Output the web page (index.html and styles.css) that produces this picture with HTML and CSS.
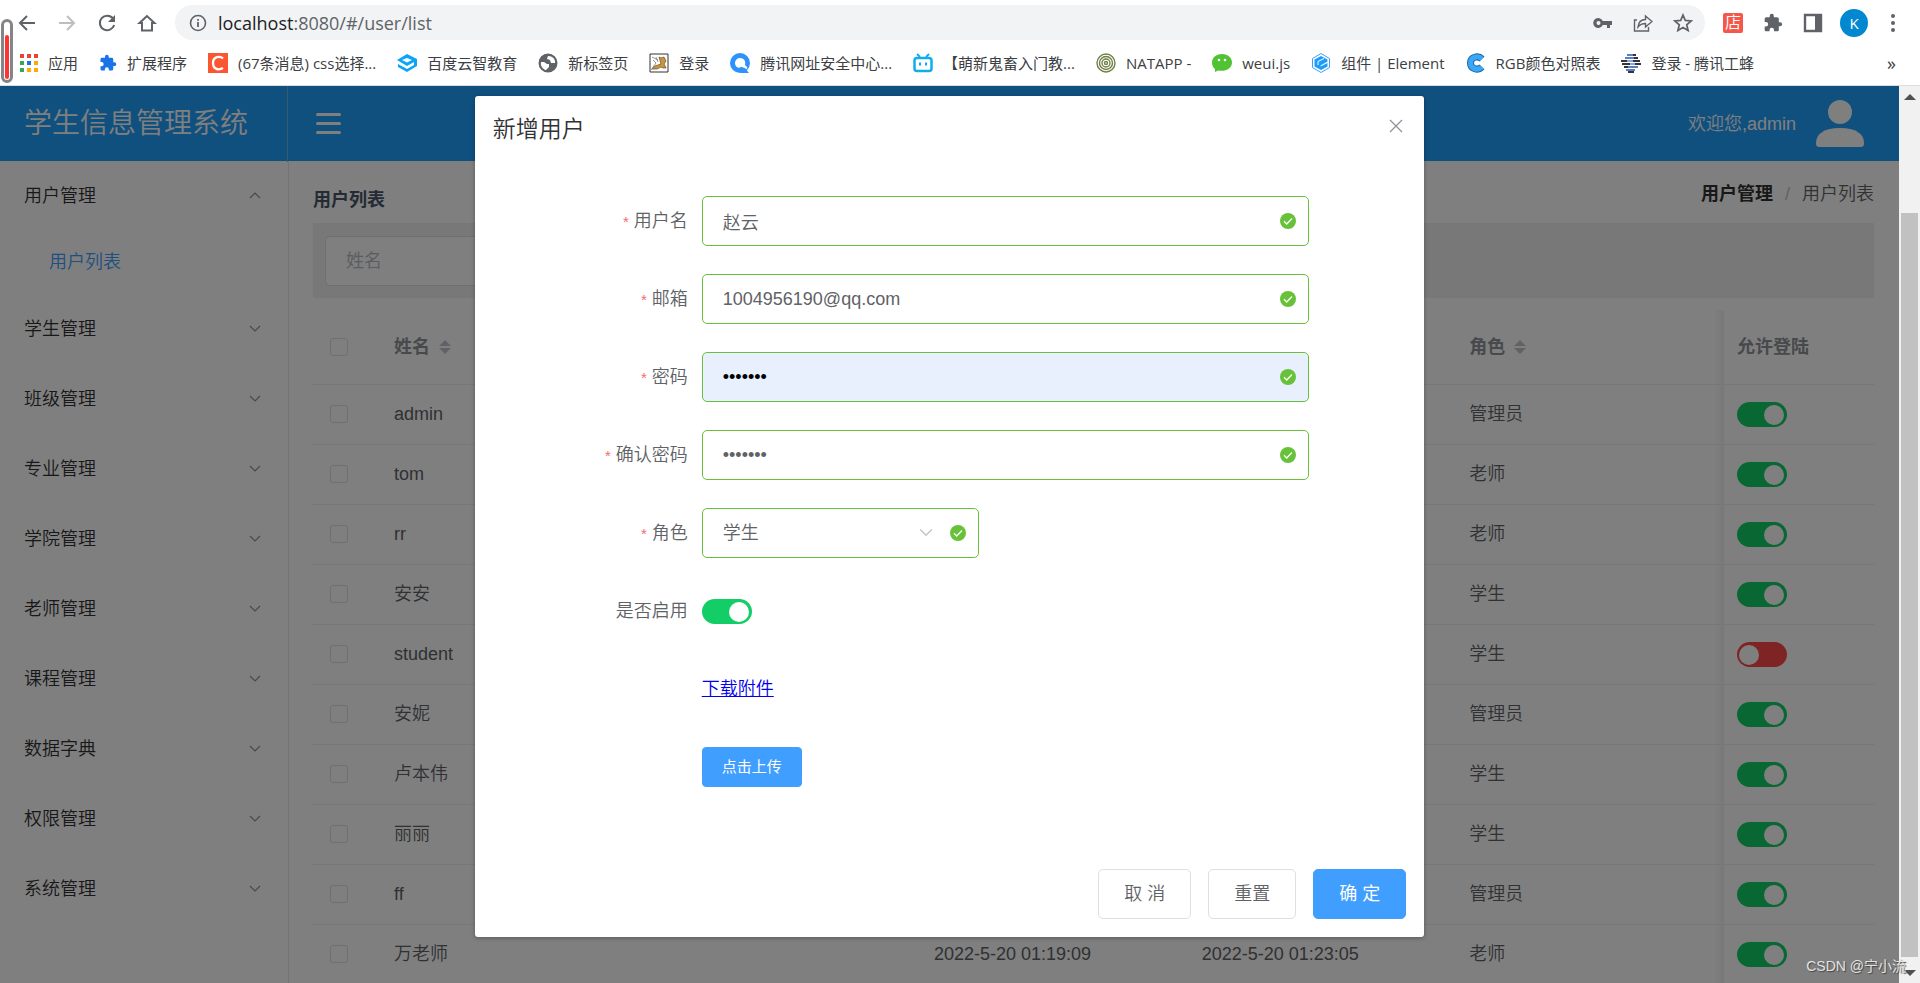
FILE: index.html
```html
<!DOCTYPE html>
<html lang="zh-CN">
<head>
<meta charset="utf-8">
<title>学生信息管理系统</title>
<link rel="stylesheet" href="styles.css">
</head>
<body>
<svg class="sprite" aria-hidden="true">
  <symbol id="down" viewBox="0 0 12 12"><path d="M1 3l5 5 5-5" fill="none" stroke="currentColor" stroke-width="1.200"/></symbol>
  <symbol id="up" viewBox="0 0 12 12"><path d="M1 8l5-5 5 5" fill="none" stroke="currentColor" stroke-width="1.200"/></symbol>
  <symbol id="sort" viewBox="0 0 12 16"><path d="M6 1l6 6H0zM6 15l6-6H0z" fill="currentColor"/></symbol>
  <symbol id="ok" viewBox="0 0 16 16"><circle cx="8" cy="8" r="8" fill="#67c23a"/><path d="M4 8.300l2.700 2.700L12 5.500" fill="none" stroke="#fff" stroke-width="1.300"/></symbol>
  <symbol id="puzzle" viewBox="0 0 24 24"><path d="M20.500 11H19V7c0-1.100-.9-2-2-2h-4V3.500a2.500 2.500 0 0 0-5 0V5H4c-1.100 0-2 .9-2 2v3.800h1.500a2.700 2.700 0 0 1 0 5.400H2V20c0 1.100.9 2 2 2h3.800v-1.500a2.700 2.700 0 0 1 5.400 0V22H17c1.100 0 2-.9 2-2v-4h1.500a2.500 2.500 0 0 0 0-5z" fill="currentColor"/></symbol>
</svg>

<header class="browser">
  <div class="toolbar">
    <button class="tool" aria-label="后退"><svg width="20" height="20" viewBox="0 0 20 20"><path d="M18 10H3M10 3l-7 7 7 7" fill="none" stroke="#5f6368" stroke-width="2"/></svg></button>
    <button class="tool" aria-label="前进"><svg width="20" height="20" viewBox="0 0 20 20"><path d="M2 10h15M10 3l7 7-7 7" fill="none" stroke="#bcbec0" stroke-width="2"/></svg></button>
    <button class="tool" aria-label="刷新"><svg width="20" height="20" viewBox="0 0 20 20"><path d="M16 5.500A7.300 7.300 0 1 0 17.200 12" fill="none" stroke="#5f6368" stroke-width="2"/><path d="M18 2v7h-7z" fill="#5f6368"/></svg></button>
    <button class="tool" aria-label="主页"><svg width="20" height="20" viewBox="0 0 20 20"><path d="M10 3l-7.500 7H5v7.500h10V10h2.500z" fill="none" stroke="#5f6368" stroke-width="2"/></svg></button>
    <div class="omnibox">
      <svg width="18" height="18" viewBox="0 0 18 18"><circle cx="9" cy="9" r="7.500" fill="none" stroke="#5f6368" stroke-width="1.600"/><path d="M9 8v5M9 5v1.700" stroke="#5f6368" stroke-width="1.800"/></svg>
      <div class="url"><span class="host">localhost</span>:8080/#/user/list</div>
      <div class="omni-actions">
        <svg width="20" height="20" viewBox="0 0 20 20"><path d="M9.800 8a5 5 0 1 0 0 4H14v3h3v-3h2V8z" fill="#5f6368"/><circle cx="5.500" cy="10" r="2" fill="#f1f3f4"/></svg>
        <svg width="20" height="20" viewBox="0 0 20 20"><path d="M4 7H1.500v11h14v-4M5 14c.5-5 3-7.500 7.500-7.500V3L19 8.500 12.500 14v-3.500C9 10.500 7 11.500 5 14z" fill="none" stroke="#5f6368" stroke-width="1.400"/></svg>
        <svg width="20" height="20" viewBox="0 0 20 20"><path d="M10 2l2.300 5.400 5.900.5-4.500 3.900 1.400 5.700L10 14.500l-5.100 3 1.400-5.700L1.800 7.900l5.900-.5z" fill="none" stroke="#5f6368" stroke-width="1.700"/></svg>
      </div>
    </div>
    <div class="extensions">
      <span class="shop">店</span>
      <svg class="grey" width="20" height="20"><use href="#puzzle"/></svg>
      <svg width="20" height="20" viewBox="0 0 20 20"><path d="M2 2h16v16H2z" fill="none" stroke="#5f6368" stroke-width="2.400"/><path d="M12 2h6v16h-6z" fill="#5f6368"/></svg>
      <button class="profile">K</button>
      <button class="tool" aria-label="更多"><svg width="6" height="20" viewBox="0 0 6 20"><g fill="#5f6368"><circle cx="3" cy="3" r="2"/><circle cx="3" cy="10" r="2"/><circle cx="3" cy="17" r="2"/></g></svg></button>
    </div>
  </div>
  <nav class="bookmarks">
    <a href="#"><svg width="18" height="18" viewBox="0 0 18 18"><path d="M0 0h4v4H0zM7 0h4v4H7zM14 0h4v4h-4z" fill="#ea4335"/><path d="M0 7h4v4H0zM0 14h4v4H0z" fill="#34a853"/><path d="M7 7h4v4H7z" fill="#1a73e8"/><path d="M7 14h4v4H7zM14 7h4v4h-4zM14 14h4v4h-4z" fill="#fbab05"/></svg>应用</a>
    <a href="#"><svg class="blue" width="18" height="18"><use href="#puzzle"/></svg>扩展程序</a>
    <a href="#"><svg width="20" height="20" viewBox="0 0 20 20"><path d="M0 0h20v20H0z" fill="#fc5531"/><path d="M15 5.500C12 2.500 5 3.500 5 10s6 7.500 10 5" fill="none" stroke="#fff" stroke-width="2.300"/></svg>(67条消息) css选择...</a>
    <a href="#"><svg width="20" height="20" viewBox="0 0 20 20"><path d="M10 1l10 5v7l-10 6-9-5v-3l9 5 7-4V9l-7 4L0 7z" fill="#0aa5f8"/><path d="M5 7l5 2.500L15 7l-5-2z" fill="#fff"/></svg>百度云智教育</a>
    <a href="#"><svg width="20" height="20" viewBox="0 0 20 20"><circle cx="10" cy="10" r="9" fill="#5f6368"/><path d="M3 9l3 0 3 2h2v3l-3 3 0 1c-3-1-6-5-5-9zM10 3l-1 3 3 1 1 3h4c1-4-2-7-7-7z" fill="#fff"/><circle cx="10" cy="10" r="8.500" fill="none" stroke="#5f6368" stroke-width="2"/></svg>新标签页</a>
    <a href="#"><svg width="20" height="20" viewBox="0 0 20 20"><path d="M1 1h18v18H1z" fill="#fff" stroke="#333"/><path d="M10 4l2 1 3-1 2 4-2 3 2 4h-3l-2-1-4 2H3l3-3 6-2z" fill="#c8963e" stroke="#6a4b20" stroke-width=".7"/><path d="M2 17l5-7-3-3M7 4l2 5M3 4l6 3" fill="none" stroke="#777" stroke-width=".8"/></svg>登录</a>
    <a href="#"><svg width="20" height="20" viewBox="0 0 20 20"><circle cx="10" cy="10" r="10" fill="#2d92fb"/><path d="M10 5a5 5 0 0 0-5 5c0 4 4 6 7 4l3 2c1 1 3-1 2-2l-2-2c1-4-1-7-5-7z" fill="#fff"/><path d="M10 14l5 1 4 5h-8z" fill="#2d92fb"/></svg>腾讯网址安全中心...</a>
    <a href="#"><svg width="20" height="20" viewBox="0 0 20 20"><rect x="1.500" y="5" width="17" height="13" rx="2.500" fill="none" stroke="#10aee8" stroke-width="2.500"/><path d="M4 1l3 3M16 1l-3 3M7 9.500v3M13 9.500v3" stroke="#10aee8" stroke-width="2"/></svg>【萌新鬼畜入门教...</a>
    <a href="#"><svg width="20" height="20" viewBox="0 0 20 20"><g fill="none" stroke="#718046" stroke-width="1.400"><circle cx="10" cy="10" r="9"/><circle cx="10" cy="10" r="6.500"/><circle cx="10" cy="10" r="4"/><circle cx="10" cy="10" r="1.500"/></g></svg>NATAPP -</a>
    <a href="#"><svg width="20" height="20" viewBox="0 0 20 20"><path d="M10 1C4 1 0 5 0 9.500c0 3 1 5 3 6.500v3l3-1.500C14 19 20 15 20 9.500 20 5 16 1 10 1z" fill="#51c332"/><circle cx="7" cy="7" r="1.300" fill="#fff"/><circle cx="13" cy="7" r="1.300" fill="#fff"/></svg>weui.js</a>
    <a href="#"><svg width="20" height="20" viewBox="0 0 20 20"><path d="M10 .5l8.500 5v9L10 19.500l-8.500-5v-9z" fill="#fff" stroke="#409eff"/><path d="M10 3l6.500 3.500v2l-7 4v1l7-3.500v3.500L10 17l-6.500-3.500v-7z" fill="#1b9cff"/><path d="M7 8.500l6-3M7 8.500V12" stroke="#fff"/></svg>组件 | Element</a>
    <a href="#"><svg width="20" height="20" viewBox="0 0 20 20"><path d="M16 6C12 2 4.500 4 4.500 10s7.500 8 11.500 4" fill="none" stroke="#1767b0" stroke-width="7"/><path d="M16 6C12 2 4.500 4 4.500 10s7.500 8 11.500 4" fill="none" stroke="#3da7f5" stroke-width="5"/></svg>RGB颜色对照表</a>
    <a href="#"><svg width="20" height="20" viewBox="0 0 20 20"><path d="M6 2h6M4 5h9M7 14h10M5 17h9" stroke="#5b7fc0" stroke-width="2"/><path d="M12 2h3M13 5h4M0 8h6M12 8h7M1 11h8M14 11h6M3 14h4M7 19h6" stroke="#35343c" stroke-width="2"/><path d="M6 8h6M9 11h5" stroke="#8da6d4" stroke-width="2"/></svg>登录 - 腾讯工蜂</a>
    <button class="overflow">»</button>
  </nav>
  <span class="gauge"><span class="gauge-fill"></span></span>
</header>

<div class="viewport">
  <div class="app">
    <header class="topbar">
      <h1 class="logo">学生信息管理系统</h1>
      <button class="burger" aria-label="折叠菜单"><span></span><span></span><span></span></button>
      <div class="welcome">欢迎您,admin
        <svg width="48" height="48" viewBox="0 0 48 48"><ellipse cx="24" cy="12" rx="12" ry="12" fill="#fff"/><path d="M0 43c0-9 8-15 24-15s24 6 24 15c0 3-1 4-4 4H4c-3 0-4-1-4-4z" fill="#fff"/></svg>
      </div>
    </header>
    <div class="columns">
      <nav class="menu">
        <button class="menu-item">用户管理<svg width="12" height="12"><use href="#up"/></svg></button>
        <a class="submenu" href="#">用户列表</a>
        <button class="menu-item">学生管理<svg width="12" height="12"><use href="#down"/></svg></button>
        <button class="menu-item">班级管理<svg width="12" height="12"><use href="#down"/></svg></button>
        <button class="menu-item">专业管理<svg width="12" height="12"><use href="#down"/></svg></button>
        <button class="menu-item">学院管理<svg width="12" height="12"><use href="#down"/></svg></button>
        <button class="menu-item">老师管理<svg width="12" height="12"><use href="#down"/></svg></button>
        <button class="menu-item">课程管理<svg width="12" height="12"><use href="#down"/></svg></button>
        <button class="menu-item">数据字典<svg width="12" height="12"><use href="#down"/></svg></button>
        <button class="menu-item">权限管理<svg width="12" height="12"><use href="#down"/></svg></button>
        <button class="menu-item">系统管理<svg width="12" height="12"><use href="#down"/></svg></button>
      </nav>
      <main class="content">
        <div class="page-head">
          <h2 class="page-title">用户列表</h2>
          <div class="crumbs"><b>用户管理</b><span class="slash">/</span><span>用户列表</span></div>
        </div>
        <div class="filters"><input class="field" type="text" placeholder="姓名" aria-label="姓名"></div>
        <table class="users">
          <colgroup><col class="c-check"><col class="c-name"><col class="c-name"><col><col><col><col class="c-allow"></colgroup>
          <thead>
            <tr><th><input class="check" type="checkbox" aria-label="全选"></th><th>姓名<svg class="sort" width="12" height="16"><use href="#sort"/></svg></th><th></th><th></th><th></th><th class="edge">角色<svg class="sort" width="12" height="16"><use href="#sort"/></svg></th><th>允许登陆</th></tr>
          </thead>
          <tbody>
            <tr><td><input class="check" type="checkbox" aria-label="选择"></td><td>admin</td><td></td><td></td><td></td><td class="edge">管理员</td><td><input class="switch" type="checkbox" aria-label="允许登陆" checked></td></tr>
            <tr><td><input class="check" type="checkbox" aria-label="选择"></td><td>tom</td><td></td><td></td><td></td><td class="edge">老师</td><td><input class="switch" type="checkbox" aria-label="允许登陆" checked></td></tr>
            <tr><td><input class="check" type="checkbox" aria-label="选择"></td><td>rr</td><td></td><td></td><td></td><td class="edge">老师</td><td><input class="switch" type="checkbox" aria-label="允许登陆" checked></td></tr>
            <tr><td><input class="check" type="checkbox" aria-label="选择"></td><td>安安</td><td></td><td></td><td></td><td class="edge">学生</td><td><input class="switch" type="checkbox" aria-label="允许登陆" checked></td></tr>
            <tr><td><input class="check" type="checkbox" aria-label="选择"></td><td>student</td><td></td><td></td><td></td><td class="edge">学生</td><td><input class="switch" type="checkbox" aria-label="允许登陆"></td></tr>
            <tr><td><input class="check" type="checkbox" aria-label="选择"></td><td>安妮</td><td></td><td></td><td></td><td class="edge">管理员</td><td><input class="switch" type="checkbox" aria-label="允许登陆" checked></td></tr>
            <tr><td><input class="check" type="checkbox" aria-label="选择"></td><td>卢本伟</td><td></td><td></td><td></td><td class="edge">学生</td><td><input class="switch" type="checkbox" aria-label="允许登陆" checked></td></tr>
            <tr><td><input class="check" type="checkbox" aria-label="选择"></td><td>丽丽</td><td></td><td></td><td></td><td class="edge">学生</td><td><input class="switch" type="checkbox" aria-label="允许登陆" checked></td></tr>
            <tr><td><input class="check" type="checkbox" aria-label="选择"></td><td>ff</td><td></td><td></td><td></td><td class="edge">管理员</td><td><input class="switch" type="checkbox" aria-label="允许登陆" checked></td></tr>
            <tr><td><input class="check" type="checkbox" aria-label="选择"></td><td>万老师</td><td></td><td>2022-5-20 01:19:09</td><td>2022-5-20 01:23:05</td><td class="edge">老师</td><td><input class="switch" type="checkbox" aria-label="允许登陆" checked></td></tr>
          </tbody>
        </table>
      </main>
    </div>

    <div class="mask">
      <section class="dialog" role="dialog" aria-labelledby="dialog-title">
        <header class="dialog-head">
          <h2 class="dialog-title" id="dialog-title">新增用户</h2>
          <button class="close" aria-label="关闭"><svg width="14" height="14" viewBox="0 0 14 14"><path d="M1 1l12 12M13 1L1 13" stroke="#909399" stroke-width="1.300"/></svg></button>
        </header>
        <form class="form">
          <div class="row"><label class="label required" for="name">用户名</label><div class="control"><input class="field valid" id="name" type="text" value="赵云"><svg class="mark" width="16" height="16"><use href="#ok"/></svg></div></div>
          <div class="row"><label class="label required" for="mail">邮箱</label><div class="control"><input class="field valid" id="mail" type="email" value="1004956190@qq.com"><svg class="mark" width="16" height="16"><use href="#ok"/></svg></div></div>
          <div class="row"><label class="label required" for="pass">密码</label><div class="control"><input class="field valid autofilled" id="pass" type="password" value="1234567"><svg class="mark" width="16" height="16"><use href="#ok"/></svg></div></div>
          <div class="row"><label class="label required" for="pass2">确认密码</label><div class="control"><input class="field valid" id="pass2" type="password" value="1234567"><svg class="mark" width="16" height="16"><use href="#ok"/></svg></div></div>
          <div class="row"><label class="label required" for="role">角色</label><div class="control narrow"><select class="field valid" id="role"><option>学生</option></select><svg class="arrow" width="14" height="14" viewBox="0 0 12 12"><use href="#down"/></svg><svg class="mark" width="16" height="16"><use href="#ok"/></svg></div></div>
          <div class="row"><label class="label" for="enabled">是否启用</label><div class="control"><input class="switch" id="enabled" type="checkbox" checked></div></div>
          <div class="row"><span class="label"></span><div class="control"><a class="download" href="#">下载附件</a></div></div>
          <div class="row"><span class="label"></span><div class="control"><button class="btn primary small" type="button">点击上传</button></div></div>
        </form>
        <footer class="dialog-foot">
          <button class="btn">取 消</button>
          <button class="btn">重置</button>
          <button class="btn primary">确 定</button>
        </footer>
      </section>
    </div>
  </div>
  <div class="scrollbar">
    <svg width="12" height="6" viewBox="0 0 12 6"><path d="M6 0l6 6H0z" fill="#505050"/></svg>
    <span class="thumb"></span>
    <svg width="12" height="6" viewBox="0 0 12 6"><path d="M6 6l6-6H0z" fill="#505050"/></svg>
  </div>
  <span class="watermark">CSDN @宁小流</span>
</div>
</body>
</html>
```

FILE: styles.css
```css
* { box-sizing: border-box; }
body {
  margin: 0;
  height: 100vh;
  display: flex;
  flex-direction: column;
  overflow: hidden;
  background: #fff;
  color: #606266;
  font: 350 18px/24px "Liberation Sans", "Noto Sans CJK SC", sans-serif;
}
button, input, select { font: inherit; color: inherit; }
button { border: 0; padding: 0; background: none; }
h1, h2 { margin: 0; }
svg { flex: none; display: block; }
.sprite { position: absolute; width: 0; height: 0; }

/* Browser chrome */
.browser { position: relative; border-bottom: 1px solid #dadce0; }
.toolbar { display: flex; align-items: center; height: 45px; padding: 0 24px 0 17px; gap: 20px; }
.tool { display: flex; }
.omnibox {
  flex: 1;
  display: flex;
  align-items: center;
  gap: 11px;
  height: 35px;
  margin: 0 -2px 0 -2px;
  padding: 0 12px 0 14px;
  border-radius: 18px;
  background: #f1f3f4;
}
.url { flex: 1; font: 400 18px/24px "Open Sans", sans-serif; color: #5f6368; }
.host { color: #202124; }
.omni-actions { display: flex; gap: 20px; }
.extensions { display: flex; align-items: center; gap: 20px; }
.shop {
  width: 20px;
  border-radius: 2px;
  background: #f4574b;
  color: #fff;
  font-size: 16px;
  line-height: 20px;
  text-align: center;
}
.grey { color: #5f6368; }
.blue { color: #1a73e8; }
.profile {
  width: 28px;
  height: 28px;
  margin-left: -3px;
  border-radius: 50%;
  background: #0288d1;
  color: #fff;
  font: 400 15px/28px "Open Sans", sans-serif;
}
.extensions .tool { margin-left: 2px; }
.bookmarks { display: flex; align-items: center; height: 40px; padding: 0 24px 4px 20px; gap: 21px; }
.bookmarks a {
  display: flex;
  align-items: center;
  gap: 10px;
  color: #3c4043;
  font: 400 15px/20px "Open Sans", "Noto Sans CJK SC", sans-serif;
  white-space: nowrap;
  text-decoration: none;
}
.overflow { margin-left: auto; color: #3c4043; font: 400 18px/20px "Open Sans", sans-serif; }
.gauge {
  position: absolute;
  left: 1px;
  top: 19px;
  width: 12px;
  height: 64px;
  padding: 13px 1px 1px;
  border: 3px solid #858585;
  border-radius: 6px;
  background: #fff;
}
.gauge-fill { display: block; height: 100%; border-radius: 2px; background: #f33; }

/* Application */
.viewport { position: relative; flex: 1; display: flex; min-height: 0; }
.app { position: relative; flex: 1; display: flex; flex-direction: column; min-width: 0; overflow: hidden; }
.topbar { flex: none; display: flex; align-items: center; height: 75px; background: #20a0ff; color: #fff; }
.logo {
  width: 288px;
  padding-left: 24px;
  border-right: 1px solid #6cb8d8;
  font-size: 28px;
  font-weight: 350;
  line-height: 76px;
}
.burger { display: grid; gap: 6px; width: 25px; margin-left: 28px; }
.burger span { height: 3px; border-radius: 2px; background: #fff; }
.welcome { display: flex; align-items: center; gap: 20px; margin-left: auto; padding-right: 35px; }
.columns { flex: 1; display: flex; min-height: 0; }
.menu { flex: none; width: 289px; border-right: 1px solid #e6e6e6; color: #303133; }
.menu-item {
  display: flex;
  align-items: center;
  justify-content: space-between;
  width: 100%;
  height: 70px;
  padding: 0 27px 0 24px;
}
.menu-item svg { color: #909399; }
.submenu { display: block; height: 63px; padding-left: 49px; line-height: 63px; color: #409eff; text-decoration: none; }
.content { flex: 1; min-width: 0; padding: 0 25px 0 24px; }
.page-head { display: flex; justify-content: space-between; height: 62px; }
.page-title { padding-top: 27px; color: #48576a; font-size: 18px; line-height: 24px; font-weight: 700; }
.crumbs { display: flex; gap: 12px; padding-top: 21px; }
.crumbs b { color: #303133; font-weight: 700; }
.slash { color: #c0c4cc; }
.filters { padding: 13px 12px 12px; background: #f0f0f0; }
.filters .field { width: 250px; border-color: #dcdfe6; }
.field {
  display: block;
  width: 100%;
  height: 50px;
  padding: 0 50px 0 20px;
  border: 1px solid #dcdfe6;
  border-radius: 5px;
  background: #fff;
  color: #606266;
  appearance: none;
  outline: 0;
}
.field::placeholder { color: #b4b8c0; }
.field.valid { border-color: #67c23a; }
.field.autofilled { background: #e8f0fe; color: #000; }
.users { width: 100%; margin-top: 12px; table-layout: fixed; border-collapse: collapse; }
.c-check { width: 68px; }
.c-name { width: 270px; }
.c-allow { width: 150px; }
.users th, .users td { height: 60px; padding: 0 13px; border-bottom: 1px solid #ebeef5; text-align: left; white-space: nowrap; }
.users th { height: 74px; color: #909399; font-weight: 700; }
.users th:first-child, .users td:first-child { padding-left: 17px; }
.edge { background: linear-gradient(to left, rgba(0, 0, 0, .06), transparent) right / 10px 100% no-repeat; }
.sort { display: inline-block; margin-left: 9px; vertical-align: -2px; color: #c0c4cc; }
.check {
  display: block;
  width: 18px;
  height: 18px;
  margin: 0;
  border: 1px solid #dcdfe6;
  border-radius: 3px;
  background: #fff;
  appearance: none;
}
.switch {
  display: block;
  width: 50px;
  height: 25px;
  margin: 0;
  padding: 3px 2px;
  border-radius: 13px;
  background: #ff4949;
  appearance: none;
}
.switch::before { content: ""; display: block; width: 20px; height: 20px; border-radius: 50%; background: #fff; }
.switch:checked { background: #13ce66; }
.switch:checked::before { margin-left: 25px; }

/* Dialog */
.mask { position: absolute; inset: 0; background: rgba(0, 0, 0, .5); }
.dialog { width: 50%; margin: 10px auto; border-radius: 3px; background: #fff; box-shadow: 0 1px 4px rgba(0, 0, 0, .3); }
.dialog-head { display: flex; justify-content: space-between; padding: 18px 21px 10px 18px; }
.dialog-title { color: #303133; font-size: 23px; font-weight: 350; line-height: 30px; }
.close { display: flex; align-items: center; height: 24px; }
.form { padding: 42px 115px 65px 114px; display: grid; gap: 28px; }
.row { display: grid; grid-template-columns: 99px 1fr; column-gap: 14px; align-items: center; height: 50px; }
.label { text-align: right; white-space: nowrap; }
.required::before { content: "*"; margin-right: 5px; color: #f56c6c; font-size: 15px; }
.control { position: relative; }
.narrow { width: 277px; }
.mark { position: absolute; right: 13px; top: 17px; }
.arrow { position: absolute; right: 46px; top: 18px; color: #c0c4cc; }
.download { color: #00e; text-decoration: underline; }
.btn {
  height: 50px;
  padding: 0 25px;
  border: 1px solid #dcdfe6;
  border-radius: 5px;
  background: #fff;
}
.btn.primary { border-color: #409eff; background: #409eff; color: #fff; font-weight: 400; }
.btn.small { height: 40px; padding: 0 19px; border-radius: 4px; font-size: 15px; }
.dialog-foot { display: flex; justify-content: flex-end; gap: 17px; padding: 12px 18px 18px; }

/* Page scrollbar */
.scrollbar {
  flex: none;
  display: grid;
  grid-template-rows: 21px 1fr 21px;
  place-items: center;
  width: 21px;
  background: #f1f1f1;
}
.thumb { align-self: end; width: 17px; height: 87%; margin-bottom: 5px; background: #c1c1c1; }
.watermark {
  position: absolute;
  right: 14px;
  bottom: 5px;
  color: #e4e4e4;
  font: 400 14px/24px "Liberation Sans", "Noto Sans CJK SC", sans-serif;
  text-shadow: 1px 1px 1px #444;
}
```
